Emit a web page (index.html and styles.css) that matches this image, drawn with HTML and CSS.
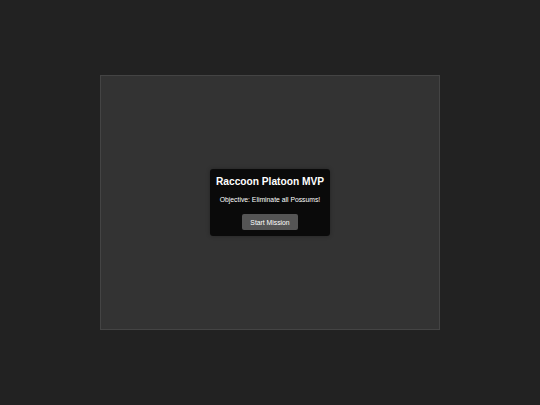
FILE: index.html
```html
<!DOCTYPE html>
<html>
<head>
<meta charset="utf-8">
<link rel="stylesheet" href="styles.css">
</head>
<body>
<div class="stage">
  <div class="game">
    <div class="overlay">
      <h1 class="title">Raccoon Platoon MVP</h1>
      <p class="objective">Objective: Eliminate all Possums!</p>
      <button class="start">Start Mission</button>
    </div>
  </div>
</div>
</body>
</html>
```
FILE: styles.css
```css
html, body {
  margin: 0;
  padding: 0;
  background: #222;
  font-family: "Liberation Sans", Arial, sans-serif;
  color: #fff;
}
.stage {
  width: 540px;
  height: 405px;
  display: flex;
  align-items: center;
  justify-content: center;
}
.game {
  width: 338px;
  height: 253px;
  background: #333;
  border: 1px solid #444;
  display: flex;
  align-items: center;
  justify-content: center;
}
.overlay {
  width: 120px;
  height: 67px;
  box-sizing: border-box;
  background: rgba(0,0,0,0.8);
  border-radius: 3px;
  display: flex;
  flex-direction: column;
  align-items: center;
  padding-top: 6px;
  box-shadow: 0 0 4px rgba(0,0,0,0.3);
}
.title {
  margin: 0;
  font-size: 10.2px;
  font-weight: bold;
  line-height: 13px;
  white-space: nowrap;
}
.objective {
  margin: 6.5px 0 0;
  font-size: 6.8px;
  line-height: 9px;
  white-space: nowrap;
}
.start {
  margin-top: 10.5px;
  width: 56px;
  height: 16px;
  background: #555;
  color: #fff;
  border: none;
  border-radius: 2px;
  font-family: "Liberation Sans", Arial, sans-serif;
  font-size: 6.8px;
  padding: 0;
  flex-shrink: 0;
}
```
